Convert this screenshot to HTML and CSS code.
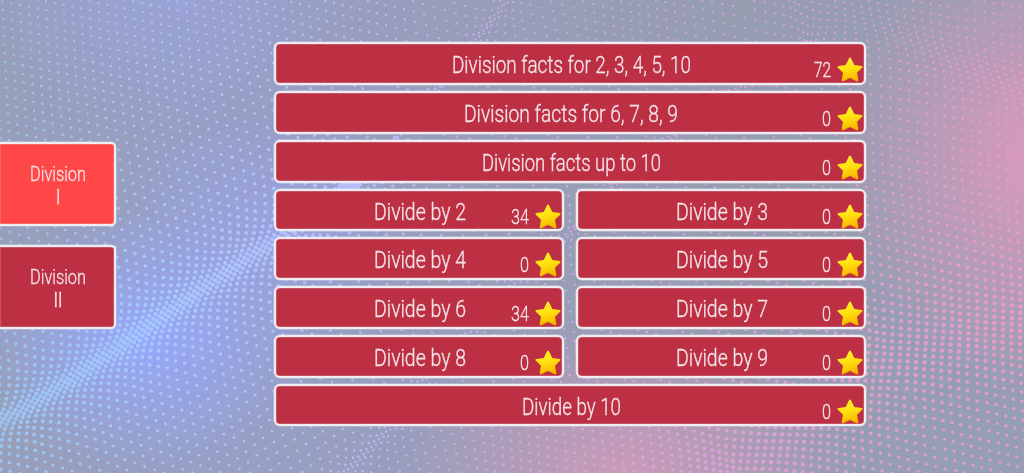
FILE: index.html
```html
<!DOCTYPE html>
<html lang="en">
<head>
<meta charset="utf-8">
<title>Division</title>
<link rel="stylesheet" href="styles.css">
</head>
<body>
<svg class="defs" width="0" height="0" aria-hidden="true">
  <defs>
    <linearGradient id="gold" x1="0" y1="0" x2="0.25" y2="1">
      <stop offset="0" stop-color="#fff23a"/><stop offset="0.55" stop-color="#ffe00f"/><stop offset="1" stop-color="#f8b900"/>
    </linearGradient>
    <symbol id="star" viewBox="0 0 26 25">
      <path d="M12 1.2Q13 -.2 14 1.2L17.300 7.900L24.600 8.900Q26.200 9.400 25.100 10.700L20 15.700L21.300 23.100Q21.200 24.900 19.600 24.300L13 20.900L6.400 24.300Q4.800 24.900 4.700 23.100L6 15.700L.9 10.700Q-.2 9.400 1.400 8.900L8.700 7.900Z" fill="url(#gold)"/>
      <path d="M5.200 23.700L13 20.200L20.800 23.700" fill="none" stroke="#eda800" stroke-width=".8" opacity=".7"/>
    </symbol>
  </defs>
</svg>
<canvas class="backdrop" id="backdrop" width="1024" height="473"></canvas>
<main class="screen">
  <nav class="tabs">
    <button class="tab active"><svg class="tab-text" width="56" height="46"><text x="0" y="18" textLength="56" lengthAdjust="spacingAndGlyphs">Division</text><text x="25.500" y="40.500">I</text></svg></button>
    <button class="tab"><svg class="tab-text" width="56" height="46"><text x="0" y="18" textLength="56" lengthAdjust="spacingAndGlyphs">Division</text><text x="23" y="40.500" textLength="10" lengthAdjust="spacing">II</text></svg></button>
  </nav>
  <section class="levels">
    <button class="level wide"><svg class="title" width="239" height="30"><text y="22" textLength="239" lengthAdjust="spacingAndGlyphs">Division facts for 2, 3, 4, 5, 10</text></svg><span class="score"><svg width="17" height="22"><text y="18.500" textLength="17" lengthAdjust="spacingAndGlyphs">72</text></svg><svg class="star"><use href="#star"/></svg></span></button>
    <button class="level wide"><svg class="title" width="214" height="30"><text y="22" textLength="214" lengthAdjust="spacingAndGlyphs">Division facts for 6, 7, 8, 9</text></svg><span class="score"><svg width="9" height="22"><text y="18.500" textLength="9" lengthAdjust="spacingAndGlyphs">0</text></svg><svg class="star"><use href="#star"/></svg></span></button>
    <button class="level wide"><svg class="title" width="179" height="30"><text y="22" textLength="179" lengthAdjust="spacingAndGlyphs">Division facts up to 10</text></svg><span class="score"><svg width="9" height="22"><text y="18.500" textLength="9" lengthAdjust="spacingAndGlyphs">0</text></svg><svg class="star"><use href="#star"/></svg></span></button>
    <button class="level"><svg class="title" width="92" height="30"><text y="22" textLength="92" lengthAdjust="spacingAndGlyphs">Divide by 2</text></svg><span class="score"><svg width="18" height="22"><text y="18.500" textLength="18" lengthAdjust="spacingAndGlyphs">34</text></svg><svg class="star"><use href="#star"/></svg></span></button>
    <button class="level"><svg class="title" width="92" height="30"><text y="22" textLength="92" lengthAdjust="spacingAndGlyphs">Divide by 3</text></svg><span class="score"><svg width="9" height="22"><text y="18.500" textLength="9" lengthAdjust="spacingAndGlyphs">0</text></svg><svg class="star"><use href="#star"/></svg></span></button>
    <button class="level"><svg class="title" width="92" height="30"><text y="22" textLength="92" lengthAdjust="spacingAndGlyphs">Divide by 4</text></svg><span class="score"><svg width="9" height="22"><text y="18.500" textLength="9" lengthAdjust="spacingAndGlyphs">0</text></svg><svg class="star"><use href="#star"/></svg></span></button>
    <button class="level"><svg class="title" width="92" height="30"><text y="22" textLength="92" lengthAdjust="spacingAndGlyphs">Divide by 5</text></svg><span class="score"><svg width="9" height="22"><text y="18.500" textLength="9" lengthAdjust="spacingAndGlyphs">0</text></svg><svg class="star"><use href="#star"/></svg></span></button>
    <button class="level"><svg class="title" width="92" height="30"><text y="22" textLength="92" lengthAdjust="spacingAndGlyphs">Divide by 6</text></svg><span class="score"><svg width="18" height="22"><text y="18.500" textLength="18" lengthAdjust="spacingAndGlyphs">34</text></svg><svg class="star"><use href="#star"/></svg></span></button>
    <button class="level"><svg class="title" width="92" height="30"><text y="22" textLength="92" lengthAdjust="spacingAndGlyphs">Divide by 7</text></svg><span class="score"><svg width="9" height="22"><text y="18.500" textLength="9" lengthAdjust="spacingAndGlyphs">0</text></svg><svg class="star"><use href="#star"/></svg></span></button>
    <button class="level"><svg class="title" width="92" height="30"><text y="22" textLength="92" lengthAdjust="spacingAndGlyphs">Divide by 8</text></svg><span class="score"><svg width="9" height="22"><text y="18.500" textLength="9" lengthAdjust="spacingAndGlyphs">0</text></svg><svg class="star"><use href="#star"/></svg></span></button>
    <button class="level"><svg class="title" width="92" height="30"><text y="22" textLength="92" lengthAdjust="spacingAndGlyphs">Divide by 9</text></svg><span class="score"><svg width="9" height="22"><text y="18.500" textLength="9" lengthAdjust="spacingAndGlyphs">0</text></svg><svg class="star"><use href="#star"/></svg></span></button>
    <button class="level wide"><svg class="title" width="99" height="30"><text y="22" textLength="99" lengthAdjust="spacingAndGlyphs">Divide by 10</text></svg><span class="score"><svg width="9" height="22"><text y="18.500" textLength="9" lengthAdjust="spacingAndGlyphs">0</text></svg><svg class="star"><use href="#star"/></svg></span></button>
  </section>
</main>
<script src="backdrop.js"></script>
</body>
</html>
```

FILE: styles.css
```css
* { box-sizing: border-box; }

body {
  margin: 0;
  height: 473px;
  overflow: hidden;
  font-family: Roboto, "Liberation Sans", sans-serif;
  background:
    radial-gradient(ellipse 170px 130px at 145px 340px, rgba(151, 168, 255, .95), rgba(151, 168, 255, 0)),
    radial-gradient(ellipse 150px 120px at 265px 230px, rgba(155, 164, 236, .7), rgba(155, 164, 236, 0)),
    radial-gradient(ellipse 180px 130px at 165px 0, rgba(155, 164, 218, .8), rgba(155, 164, 218, 0)),
    radial-gradient(ellipse 220px 230px at 1050px 160px, rgba(226, 153, 188, .95), rgba(226, 153, 188, 0)),
    radial-gradient(ellipse 220px 150px at 625px 473px, rgba(208, 154, 184, .9), rgba(208, 154, 184, 0)),
    linear-gradient(90deg, #989fb9, #979fc5 20%, #989eb9 45%, #979db1 70%, #969eb3);
}

.defs { position: absolute; }
.backdrop { position: absolute; left: 0; top: 0; z-index: -1; }

.screen {
  display: flex;
  align-items: flex-start;
  height: 473px;
}

button {
  appearance: none;
  margin: 0;
  padding: 0;
  font: inherit;
  border: 2px solid #f0edf2;
  background: #bd3044;
  box-shadow: 0 0 0 .5px rgba(240, 237, 242, .55), inset 0 0 0 .5px rgba(240, 237, 242, .4);
}

svg { display: block; overflow: visible; }
text { fill: #f3e4e9; stroke: #f3e4e9; stroke-width: .3px; font-weight: 300; }

.tabs {
  width: 116px;
  padding-top: 142px;
  display: grid;
  gap: 19px;
}
.tab {
  height: 84px;
  padding: 3px 0 0 30px;
  border-left-width: 0;
  border-radius: 0 5px 5px 0;
}
.tab.active { background: #ff4747; }
.tab-text { font-size: 20.500px; }

.levels {
  width: 592px;
  margin-left: 158.300px;
  padding-top: 42.400px;
  display: grid;
  grid-template-columns: 290px 290px;
  grid-auto-rows: 42.900px;
  gap: 5.850px 12px;
}
.level {
  display: grid;
  grid-template-columns: 1fr;
  border-radius: 6px;
}
.wide { grid-column: 1 / -1; }
.title {
  grid-area: 1 / 1;
  justify-self: center;
  align-self: start;
  margin: 7px 0 0 2px;
  font-size: 23px;
}
.score {
  grid-area: 1 / 1;
  justify-self: end;
  align-self: start;
  display: flex;
  gap: 6px;
  margin: 13px 1px 0 0;
  font-size: 20px;
}
.score > svg:first-child { margin-top: 1px; }
.star { width: 26px; height: 25px; }
```

FILE: backdrop.js
```js
// Draws a dotted lattice pinched along several flowing ridges.
const ctx = document.getElementById('backdrop').getContext('2d');
const ridges = [
  { a: 0.74, w: 105, pts: [[-100, 470], [-40, 442], [20, 410], [70, 380], [115, 350], [160, 318], [205, 287], [245, 260], [280, 238], [320, 210], [350, 184]] },
  { a: 0.84, w: 44, pts: [[350, 184], [398, 135], [445, 88], [470, 48], [500, 10], [530, -40]] },
  { a: 0.84, w: 44, pts: [[310, 520], [350, 470], [385, 435], [430, 379], [490, 310], [570, 235], [615, 184], [675, 136], [740, 88], [800, 60]] },
  { a: 0.5, w: 55, pts: [[800, -10], [850, 12], [900, 35], [960, 62], [1100, 125]] },
  { a: 0.3, w: 95, pts: [[740, 470], [820, 410], [890, 360], [960, 335], [1100, 305]] }
];

function nearest(x, y, pts) {
  let best = { d: Infinity };
  for (let i = 1; i < pts.length; i++) {
    const [ax, ay] = pts[i - 1], [bx, by] = pts[i];
    const dx = bx - ax, dy = by - ay;
    const t = Math.max(0, Math.min(1, ((x - ax) * dx + (y - ay) * dy) / (dx * dx + dy * dy)));
    const px = ax + t * dx, py = ay + t * dy;
    const d = Math.hypot(x - px, y - py);
    if (d < best.d) best = { x: px, y: py, d };
  }
  return best;
}

function tint(x) {
  const stops = [[0, 153, 200, 252], [160, 168, 205, 255], [300, 182, 196, 255], [430, 193, 180, 245], [620, 214, 166, 226], [1024, 240, 154, 205]];
  let i = 1;
  while (i < stops.length - 1 && x > stops[i][0]) i++;
  const a = stops[i - 1], b = stops[i];
  const t = Math.max(0, Math.min(1, (x - a[0]) / (b[0] - a[0])));
  const c = [1, 2, 3].map(k => Math.round(a[k] + (b[k] - a[k]) * t));
  return `rgba(${c[0]},${c[1]},${c[2]},.88)`;
}

for (let i = -12; i < 140; i++) {
  for (let j = -30; j < 80; j++) {
    const u = i * 8.8 + j * 0.4;
    const v = j * 8.6 + i * 1.7 - 50;
    let x = u, y = v, near = 999;
    for (const r of ridges) {
      const q = nearest(u, v, r.pts);
      const k = r.a * Math.exp(-(q.d * q.d) / (r.w * r.w));
      x += (q.x - u) * k;
      y += (q.y - v) * k;
      if (r === ridges[0] || r === ridges[4]) near = Math.min(near, q.d);
    }
    if (x < -4 || x > 1028 || y < -4 || y > 477) continue;
    const radius = 1.25 + 0.95 * Math.exp(-(near * near) / 12000) - (y < 60 ? 0.1 : 0);
    ctx.fillStyle = tint(x);
    ctx.beginPath();
    ctx.arc(x, y, radius, 0, Math.PI * 2);
    ctx.fill();
  }
}
```
